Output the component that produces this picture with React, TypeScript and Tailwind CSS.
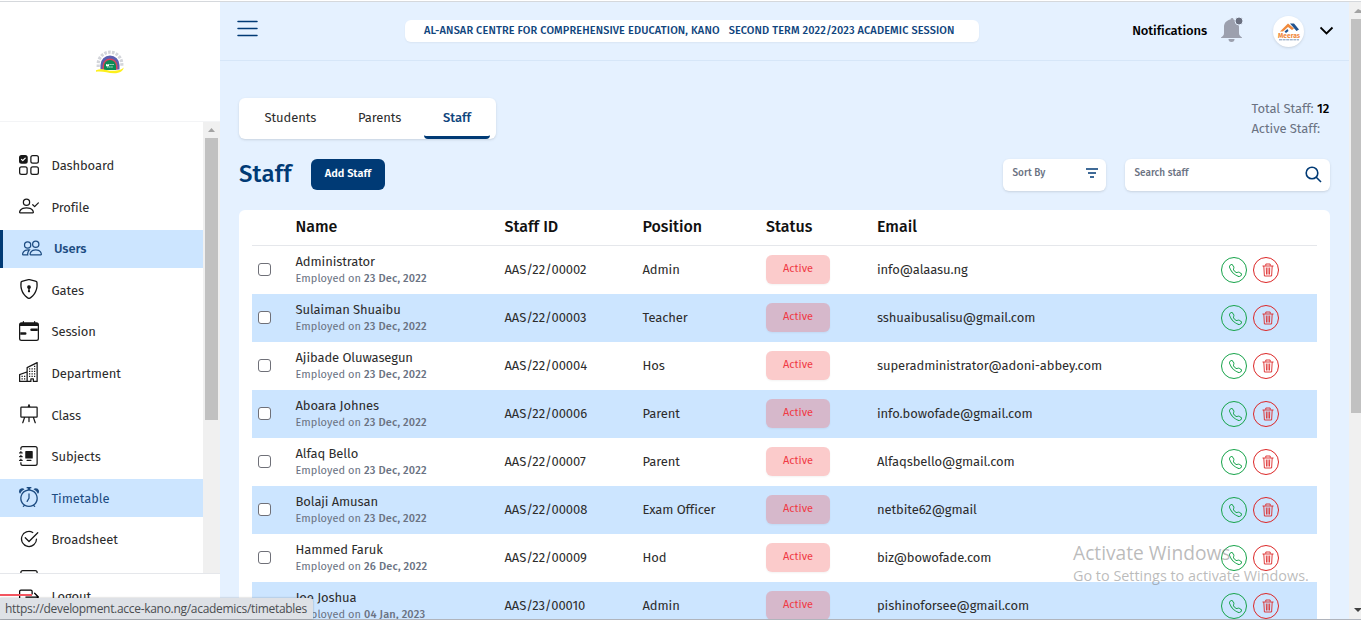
import type { ReactNode } from "react";
import {
  BsAlarm,
  BsBoxArrowRight,
  BsCalendarRange,
  BsCheck2Circle,
  BsEasel,
  BsJournal,
  BsJournalAlbum,
  BsPeople,
  BsShieldLock,
  BsTelephone,
  BsUiChecksGrid,
} from "react-icons/bs";

function PersonCheck() {
  return (
    <svg viewBox="0 0 16 16" fill="currentColor" className="h-5 w-5">
      <path d="M6 8a3 3 0 1 0 0-6 3 3 0 0 0 0 6zm2-3a2 2 0 1 1-4 0 2 2 0 0 1 4 0zm4 8c0 1-1 1-1 1H1s-1 0-1-1 1-4 6-4 6 3 6 4zm-1-.004c-.001-.246-.154-.986-.832-1.664C9.516 10.68 8.289 10 6 10c-2.29 0-3.516.68-4.168 1.332-.678.678-.83 1.418-.832 1.664h10z" />
      <path d="M15.854 5.146a.5.5 0 0 1 0 .708l-3 3a.5.5 0 0 1-.708 0l-1.5-1.5a.5.5 0 0 1 .708-.708L12.5 7.793l2.646-2.647a.5.5 0 0 1 .708 0z" />
    </svg>
  );
}

function Building() {
  return (
    <svg viewBox="0 0 16 16" fill="currentColor" className="h-5 w-5">
      <path fillRule="evenodd" d="M14.763.075A.5.5 0 0 1 15 .5v15a.5.5 0 0 1-.5.5h-3a.5.5 0 0 1-.5-.5V14h-1v1.500a.5.5 0 0 1-.5.5h-9a.5.5 0 0 1-.5-.5V10a.5.5 0 0 1 .342-.474L6 7.64V4.500a.5.5 0 0 1 .276-.447l8-4a.5.5 0 0 1 .487.022zM6 8.694 1 10.360V15h5V8.694zM7 15h2v-1.500a.5.5 0 0 1 .5-.5h2a.5.5 0 0 1 .5.5V15h2V1.309l-7 3.500V15z" />
      <path d="M2 11h1v1H2v-1zm2 0h1v1H4v-1zm-2 2h1v1H2v-1zm2 0h1v1H4v-1zm4-4h1v1H8V9zm2 0h1v1h-1V9zm-2 2h1v1H8v-1zm2 0h1v1h-1v-1zm2-2h1v1h-1V9zm0 2h1v1h-1v-1zM8 7h1v1H8V7zm2 0h1v1h-1V7zm2 0h1v1h-1V7zM8 5h1v1H8V5zm2 0h1v1h-1V5zm2 0h1v1h-1V5zm0-2h1v1h-1V3z" />
    </svg>
  );
}

type Item = { label: string; icon: ReactNode; state?: "current" | "hover" };

const menu: Item[] = [
  { label: "Dashboard", icon: <BsUiChecksGrid size={20} /> },
  { label: "Profile", icon: <PersonCheck /> },
  { label: "Users", icon: <BsPeople size={20} />, state: "current" },
  { label: "Gates", icon: <BsShieldLock size={20} /> },
  { label: "Session", icon: <BsCalendarRange size={20} /> },
  { label: "Department", icon: <Building /> },
  { label: "Class", icon: <BsEasel size={20} /> },
  { label: "Subjects", icon: <BsJournalAlbum size={20} /> },
  { label: "Timetable", icon: <BsAlarm size={20} />, state: "hover" },
  { label: "Broadsheet", icon: <BsCheck2Circle size={20} /> },
  { label: "", icon: <BsJournal size={20} /> },
];

const staff = [
  ["Administrator", "23 Dec, 2022", "AAS/22/00002", "Admin", "info@alaasu.ng"],
  ["Sulaiman Shuaibu", "23 Dec, 2022", "AAS/22/00003", "Teacher", "sshuaibusalisu@gmail.com"],
  ["Ajibade Oluwasegun", "23 Dec, 2022", "AAS/22/00004", "Hos", "superadministrator@adoni-abbey.com"],
  ["Aboara Johnes", "23 Dec, 2022", "AAS/22/00006", "Parent", "info.bowofade@gmail.com"],
  ["Alfaq Bello", "23 Dec, 2022", "AAS/22/00007", "Parent", "Alfaqsbello@gmail.com"],
  ["Bolaji Amusan", "23 Dec, 2022", "AAS/22/00008", "Exam Officer", "netbite62@gmail"],
  ["Hammed Faruk", "26 Dec, 2022", "AAS/22/00009", "Hod", "biz@bowofade.com"],
  ["Joe Joshua", "04 Jan, 2023", "AAS/23/00010", "Admin", "pishinoforsee@gmail.com"],
];

function Crest() {
  return (
    <svg viewBox="0 0 30 24" className="h-6 w-[30px]">
      <path d="M3.200 17v-3a11.800 11.800 0 0 1 23.600 0v3" fill="none" stroke="#d3d5da" strokeWidth="3.200" strokeDasharray="2.600 1.300" />
      <path d="M5.500 19.500V15a9.500 9.500 0 0 1 19 0v4.500z" fill="#5a5fb0" />
      <path d="M7.500 19.500V16a7.500 7.500 0 0 1 15 0v3.500z" fill="#d8455c" />
      <path d="M9 20v-4a6 6 0 0 1 12 0v4z" fill="#0b8a55" />
      <path d="M11 14.500h8M12 17h6" stroke="#c4e8d6" strokeWidth="1" strokeDasharray="1.500 .6" />
      <path d="M11 15.500h3" stroke="#fff" strokeWidth="1.500" />
      <path d="M1 20.200c6-2.800 11 .8 17 .6 5-.2 9-1 10.500-3.400.5 2.700-3.500 5.900-9.500 5.900C12 23.200 8 20.800 1 21.800z" fill="#fdf01c" />
    </svg>
  );
}

function Sidebar() {
  return (
    <aside className="flex w-[220px] shrink-0 flex-col bg-white">
      <div className="flex h-[120px] shrink-0 items-center justify-center border-b border-gray-100">
        <Crest />
      </div>
      <div className="flex h-[451px] shrink-0">
        <nav className="flex flex-1 flex-col gap-[3.55px] overflow-hidden pt-[25px]">
          {menu.map((m, i) => (
            <div
              key={i}
              className={
                m.state === "current"
                  ? "flex h-[38px] shrink-0 items-center gap-3 border-l-[3px] border-[#003a75] bg-[#cce5ff] pl-[19px] text-[#1d4c82]"
                  : m.state === "hover"
                    ? "flex h-[38px] shrink-0 items-center gap-[12.5px] bg-[#cce5ff] pl-[19px] text-[#1d4c82]"
                    : "flex h-[38px] shrink-0 items-center gap-[12.5px] pl-[19px] text-[#181818]"
              }
            >
              <span className="-mt-[2.5px]">{m.icon}</span>
              <span
                className={
                  m.state === "current"
                    ? "text-[13px] font-medium tracking-[-0.1px]"
                    : m.state === "hover"
                      ? "text-[13px] tracking-[-0.1px]"
                      : "text-[13px] tracking-[-0.1px] text-[#2c2c2c]"
                }
              >
                {m.label}
              </span>
            </div>
          ))}
        </nav>
        <div className="flex w-[17px] shrink-0 flex-col items-center bg-[#f0f0f0]">
          <svg viewBox="0 0 17 16" className="h-4 w-[17px]">
            <path d="M5 10h7L8.500 6z" fill="#a3a3a3" />
          </svg>
          <div className="h-[282px] w-[13px] bg-[#c1c1c1]" />
        </div>
      </div>
      <div className="flex flex-1 items-start gap-[12.5px] border-t border-gray-200 pl-[19px] pt-[13px] text-black">
        <BsBoxArrowRight size={20} />
        <span className="text-[13px] leading-[20px] tracking-[-0.1px] text-[#2c2c2c]">Logout</span>
      </div>
    </aside>
  );
}

function Bell() {
  return (
    <svg viewBox="0 0 24 26" className="h-[26px] w-6">
      <path d="M10.500 3.500a1.500 1.500 0 0 1 3-.1C17 4.200 19 7 19 11v6c0 2.300 1.200 3.200 3 4.500v.5H1v-.5C3 20.200 4 19.300 4 17v-6c0-4 2.500-6.800 6.500-7.500z" fill="#9ca0ae" />
      <path d="M8.500 23h6a3 3 0 0 1-6 0z" fill="#9ca0ae" />
      <circle cx="19" cy="5" r="4" fill="#6b7080" stroke="#e5f1ff" strokeWidth="1" />
    </svg>
  );
}

function Header() {
  return (
    <header className="flex h-[59px] shrink-0 items-center border-b border-[#d6e6f8] pl-[17px] pr-[15px]">
      <svg viewBox="0 0 21 18" className="-mt-1 h-[18px] w-[21px]" stroke="#003a75" strokeWidth="1.500" strokeLinecap="round">
        <path d="M1 1.500h19M1 8.500h19M1 15.500h19" />
      </svg>
      <div className="ml-[147px] flex h-[22px] w-[574px] items-center rounded-md bg-white pl-[19px] text-[11px] font-medium whitespace-nowrap text-[#0f457d] shadow-xs">
        <span className="tracking-[0.12px]">AL-ANSAR CENTRE FOR COMPREHENSIVE EDUCATION, KANO</span>
        <span className="ml-[9px] tracking-[0.12px]">SECOND TERM 2022/2023 ACADEMIC SESSION</span>
      </div>
      <span className="ml-auto text-[13px] font-medium tracking-[-0.1px] text-black">Notifications</span>
      <div className="-mt-[5px] ml-[13px]">
        <Bell />
      </div>
      <div className="ml-[29px] flex h-[31px] w-[31px] items-center justify-center rounded-full bg-white shadow-sm">
        <svg viewBox="0 0 24 20" className="-mt-px h-5 w-6">
          <path d="m3 10.500 8-8 6 5-2 1.500-4-3-5 4.500z" fill="#f08a3c" />
          <path d="M13 2.500h4l5 6-2.500 1.500zM7.500 10.500l3-2.500 1 2L9 12z" fill="#23548f" />
          <text x="1" y="17.300" textLength="22" lengthAdjust="spacingAndGlyphs" className="fill-[#f08a3c] text-[7px] font-bold">Meeras</text>
          <path d="M2 18.800h20" stroke="#7894b5" strokeWidth="1" strokeDasharray="3 .6" />
        </svg>
      </div>
      <svg viewBox="0 0 14 10" className="ml-[16px] h-[10px] w-[14px]" fill="none" stroke="#000" strokeWidth="1.800">
        <path d="m.5 1.500 6 6 6-6" />
      </svg>
    </header>
  );
}

function Trash() {
  return (
    <svg viewBox="0 0 12 14" className="ml-[3px] h-[14px] w-3" fill="none" stroke="#dc2626" strokeWidth="0.900">
      <path d="M.5 3h11M3.800 2.700V1h4.400v1.700M1.800 3l.6 10h7.200l.6-10M4.300 4.500l.2 7M6 4.500v7M7.700 4.500l-.2 7" />
    </svg>
  );
}

const columns =
  "grid grid-cols-[43.5px_209px_138px_123.5px_111px_344px_1fr] items-center";

function StaffTable() {
  return (
    <section className="mt-[19px] mr-[19px] ml-[19px] flex flex-1 flex-col overflow-hidden rounded-t-md bg-white px-[13px]">
      <div className={`${columns} h-9 shrink-0 border-b border-gray-200 pb-[2px] text-[16px] font-medium text-[#111]`}>
        <span />
        <span>Name</span>
        <span>Staff ID</span>
        <span>Position</span>
        <span>Status</span>
        <span>Email</span>
        <span />
      </div>
      {staff.map(([name, date, id, position, email], i) => (
        <div
          key={id}
          className={`${columns} h-12 shrink-0 text-[13px] tracking-[-0.1px] text-[#2c2c2c] ${i % 2 ? "bg-[#cce5ff]" : "bg-white"}`}
        >
          <span className="mb-[2px] ml-[6px] h-[13px] w-[13px] rounded-[3px] border border-[#6f7078] bg-white" />
          <div className="flex flex-col">
            <span className="leading-[16px]">{name}</span>
            <span className="text-[11px] leading-[17px] tracking-[0.05px] text-gray-500">
              Employed on <span className="font-medium tracking-[0.16px]">{date}</span>
            </span>
          </div>
          <span>{id}</span>
          <span>{position}</span>
          <span className="mb-[2px] flex h-[29px] w-16 items-center justify-center rounded-md bg-[#ef4444]/28 text-[11px] tracking-[0.03px] text-[#f03a45] shadow-xs">
            Active
          </span>
          <span>{email}</span>
          <div className="flex gap-[6px]">
            <span className="flex h-[26px] w-[26px] items-center justify-center rounded-full border border-[#16a34a] text-[#16a34a]">
              <BsTelephone size={13} className="mt-px ml-[3px]" />
            </span>
            <span className="flex h-[26px] w-[26px] items-center justify-center rounded-full border border-[#dc2626]">
              <Trash />
            </span>
          </div>
        </div>
      ))}
    </section>
  );
}

export default function App() {
  return (
    <div className="relative flex h-[620px] w-[1361px] flex-col overflow-hidden bg-white font-['Fira_Sans','Noto_Sans',sans-serif]">
      <div className="mt-px h-px shrink-0 bg-[#d5d8dc]" />
      <div className="flex min-h-0 flex-1">
        <Sidebar />
        <main className="flex min-w-0 flex-1 flex-col bg-[#e5f1ff]">
          <Header />
          <div className="mt-[37px] mr-[19px] ml-[19px] flex items-start justify-between">
            <div className="flex h-[41px] w-[257px] rounded-md bg-white text-[13px] text-[#2c2c2c] shadow-sm">
              <span className="w-[93px] pt-[10px] pl-[25.5px] tracking-[-0.1px]">Students</span>
              <span className="w-[92px] pt-[10px] pl-[26px] tracking-[-0.1px]">Parents</span>
              <span className="w-[66px] rounded-b border-b-[3px] border-[#003a75] pt-[10px] text-center font-medium text-[#0f457d]">Staff</span>
            </div>
            <div className="w-[78.500px] pt-px text-[13px] leading-5 tracking-[-0.08px] whitespace-nowrap text-gray-500">
              <div>Total Staff: <span className="font-medium text-black">12</span></div>
              <div>Active Staff:</div>
            </div>
          </div>
          <div className="mt-5 mr-[19px] ml-[19px] flex h-8 items-start">
            <h1 className="w-[72px] text-[24px] leading-[30px] font-medium tracking-[0.15px] text-[#003a75]">Staff</h1>
            <button className="h-[31px] w-[74px] rounded-md bg-[#003a75] text-[11px] font-semibold text-white">Add Staff</button>
            <div className="ml-auto flex h-8 w-[103px] items-center justify-between rounded-md bg-white pr-2 pl-[9.5px] text-[10px] font-medium text-gray-500 shadow-sm">
              <span className="pb-[3px]">Sort By</span>
              <svg viewBox="0 0 12 10" className="mb-1 h-[10px] w-3" stroke="#003a75" strokeWidth="1.500">
                <path d="M0 1h12M2 5h8M4 9h4" />
              </svg>
            </div>
            <div className="ml-[19px] flex h-8 w-[205px] items-center justify-between rounded-md bg-white pr-2 pl-[9.5px] text-[10px] font-medium text-gray-500 shadow-sm">
              <span className="pb-[3px]">Search staff</span>
              <svg viewBox="0 0 17 17" className="mb-px h-[17px] w-[17px]" fill="none" stroke="#003a75" strokeWidth="1.600">
                <circle cx="7" cy="7" r="5.800" />
                <path d="m11 11 5 5" />
              </svg>
            </div>
          </div>
          <StaffTable />
        </main>
        <div className="flex w-[12px] shrink-0 flex-col bg-[#f0f0f0] pl-[2px]">
          <svg viewBox="0 0 10 17" className="h-[17px] w-[10px] shrink-0">
            <path d="M3 11h7V8.500L7 7z" fill="#a3a3a3" />
          </svg>
          <div className="h-[394px] bg-[#c1c1c1]" />
          <svg viewBox="0 0 10 17" className="mt-auto h-[17px] w-[10px] shrink-0">
            <path d="M3 6h8L7 10z" fill="#404040" />
          </svg>
        </div>
      </div>
      <div className="h-px shrink-0 bg-[#b0b4bc]" />

      <div className="absolute top-[541px] left-[1073px] font-['Open_Sans','Noto_Sans',sans-serif] text-[#777]/50">
        <div className="text-[19.2px] leading-[24px] whitespace-nowrap">Activate Windows</div>
        <div className="text-[14.4px] leading-[22px] whitespace-nowrap">Go to Settings to activate Windows.</div>
      </div>
      <div className="absolute top-[594px] left-0 h-[2px] w-8 bg-[#f35560]" />
      <div className="absolute top-[598px] left-0 flex h-[21px] w-[313px] items-center rounded-tr-[3px] bg-[#dee1e6] pl-[5px] font-['Open_Sans','Noto_Sans',sans-serif] text-[12px] tracking-[-0.3px] whitespace-nowrap text-[#4a4d51] shadow-[0_0_2px_#0005]">
        https://development.acce-kano.ng/academics/timetables
      </div>
    </div>
  );
}
